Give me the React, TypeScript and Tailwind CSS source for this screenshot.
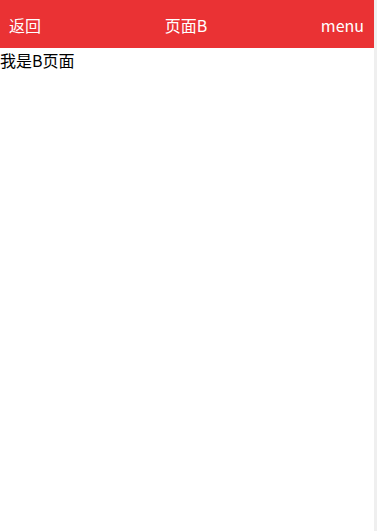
export default function App() {
  return (
    <div className="flex h-[531px] w-[377px] bg-white" style={{ fontFamily: '"Noto Sans CJK SC", "Noto Sans", sans-serif' }}>
      <div className="flex w-[374px] flex-col">
        <div className="flex h-[48px] items-center justify-between bg-[#ea3234] pl-[9px] pr-[10px] pt-[1px] text-[16px] text-white">
          <span>返回</span>
          <span className="pl-[10px]">页面B</span>
          <span>menu</span>
        </div>
        <div className="text-[16px] leading-[24px] text-black">我是B页面</div>
      </div>
      <div className="w-[3px] bg-[#efefef]" />
    </div>
  );
}
